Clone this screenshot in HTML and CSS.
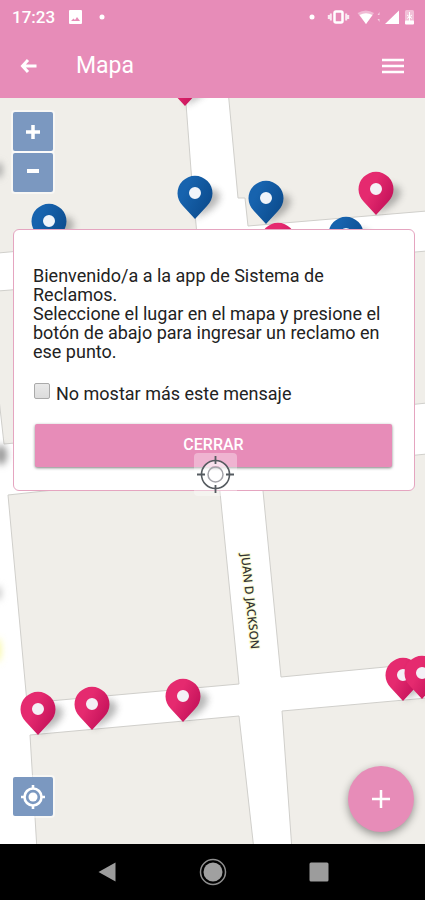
FILE: index.html
```html
<!DOCTYPE html>
<html lang="es">
<head>
<meta charset="utf-8">
<meta name="viewport" content="width=device-width, initial-scale=1">
<title>Mapa</title>
<link rel="stylesheet" href="styles.css">
</head>
<body>
<header class="top">
  <div class="status">
    <div class="status-group">
      <span class="clock">17:23</span>
      <svg class="status-left" width="40" height="16" viewBox="0 0 40 16" aria-hidden="true">
        <path fill="#fff" fill-rule="evenodd" d="M1 1h11a1 1 0 0 1 1 1v12a1 1 0 0 1-1 1H1a1 1 0 0 1-1-1V2a1 1 0 0 1 1-1zM2 12h9L8 8l-2 3-1.500-1.500z"/>
        <circle cx="33" cy="8" r="2.500" fill="#fff"/>
      </svg>
    </div>
    <svg class="status-right" width="106" height="18" viewBox="0 0 106 18" aria-hidden="true">
      <circle cx="4" cy="9" r="2.500" fill="#fff"/>
      <rect x="26.500" y="3.500" width="8" height="11" rx="1.500" fill="none" stroke="#fff" stroke-width="2.500"/>
      <path d="M22.800 5.500v7M38.200 5.500v7M20.800 7v4M40.200 7v4" fill="none" stroke="#fff" stroke-width="2" opacity=".8"/>
      <path d="M49.500 5Q58 0 66 5L58 16z" fill="#fff" opacity=".4"/>
      <path d="M51.500 7Q58 3.500 64.500 7L58 16z" fill="#fff"/>
      <path d="M71.500 4l-2 3h2zM71.500 14l-2-3h2z" fill="#fff" opacity=".6"/>
      <path d="M91 2.500V16H77z" fill="#fff"/>
      <rect x="97" y="2" width="9" height="14" rx="1.500" fill="#fff" opacity=".45"/>
      <path d="M101.500 4v9M99 7l5 3.500M104 7l-5 3.500" stroke="#fff" fill="none"/>
      <rect x="97" y="12.500" width="9" height="4" rx="1" fill="#fff"/>
    </svg>
  </div>
  <div class="toolbar">
    <button class="icon-btn" type="button" aria-label="Volver">
      <svg width="18" height="16" viewBox="0 0 18 16"><path d="M8 2L2.500 8 8 14M3 8h13.500" fill="none" stroke="#fff" stroke-width="3"/></svg>
    </button>
    <h1 class="title">Mapa</h1>
    <button class="icon-btn" type="button" aria-label="Menú">
      <svg width="22" height="16" viewBox="0 0 22 16"><path d="M0 2h22M0 8h22M0 14h22" stroke="#fff" stroke-width="2.600"/></svg>
    </button>
  </div>
</header>

<main class="map">
  <svg class="map-canvas" viewBox="0 98 425 746" preserveAspectRatio="xMidYMid slice" role="img" aria-label="Plano de calles">
    <defs>
      <linearGradient id="pink" x1="0" y1="0" x2="1" y2=".6">
        <stop offset=".45" stop-color="#e52a6f"/><stop offset="1" stop-color="#c4125a"/>
      </linearGradient>
      <linearGradient id="blue" x1="0" y1="0" x2="1" y2=".6">
        <stop offset=".3" stop-color="#1763ae"/><stop offset="1" stop-color="#0c4c8e"/>
      </linearGradient>
      <filter id="soft" x="-60%" y="-60%" width="220%" height="220%"><feGaussianBlur stdDeviation="3.500"/></filter>
      <path id="shadow" d="M0 26L10 20Q25 12 25 2Q21-6 12-4z" fill="#444" opacity=".38" filter="url(#soft)"/>
      <path id="drop" fill-rule="evenodd" d="M0 26L-12 13A17.500 17.500 0 1 1 12 13zM0-6A6 6 0 1 0 0 6A6 6 0 1 0 0-6z"/>
      <g id="pin-pink"><use href="#shadow"/><circle r="7" fill="#f4f0f6"/><use href="#drop" fill="url(#pink)"/></g>
      <g id="pin-blue"><use href="#shadow"/><circle r="7" fill="#f0f4fa"/><use href="#drop" fill="url(#blue)"/></g>
    </defs>
    <g fill="#f0eee9" stroke="#d0cfcb">
      <path d="M-2 90H185L191 170L197 235L-2 253z"/>
      <path d="M228 90L238 198H245L248 226L427 211V90z"/>
      <path d="M-2 291L200 275L214 425L4 444L-2 390z"/>
      <path d="M250 266L427 251V403L264 420z"/>
      <path d="M8 495L218 472L239 684L27 703z"/>
      <path d="M261 470L427 454V663L281 677z"/>
      <path d="M30 735L239 716L254 850H37z"/>
      <path d="M282 711L427 698V850H292z"/>
    </g>
    <g filter="url(#soft)">
      <ellipse cx="-1" cy="170" rx="3" ry="8" fill="#999"/>
      <ellipse cx="1" cy="455" rx="6" ry="10" fill="#999"/>
      <ellipse cx="-2" cy="593" rx="3" ry="7" fill="#bbb"/>
      <ellipse cx="-2" cy="650" rx="2" ry="12" fill="#f4f46a"/>
    </g>
    <text class="street" transform="translate(241 554) rotate(84)">JUAN D JACKSON</text>
    <use href="#pin-pink" x="185" y="80"/>
    <use href="#pin-blue" x="195" y="193"/>
    <use href="#pin-blue" x="266" y="198"/>
    <use href="#pin-pink" x="376" y="189"/>
    <use href="#pin-blue" x="49" y="221"/>
    <use href="#pin-pink" x="278" y="240"/>
    <use href="#pin-blue" x="346" y="234"/>
    <use href="#pin-pink" x="38" y="709"/>
    <use href="#pin-pink" x="92" y="704"/>
    <use href="#pin-pink" x="183" y="696"/>
    <use href="#pin-pink" x="403" y="675"/>
    <use href="#pin-pink" x="422" y="673"/>
  </svg>

  <div class="zoom">
    <button class="map-btn" type="button" aria-label="Acercar"><svg width="14" height="14" viewBox="0 0 14 14"><path d="M7 0v14M0 7h14" stroke="#fff" stroke-width="3.500"/></svg></button>
    <button class="map-btn" type="button" aria-label="Alejar"><svg width="14" height="14" viewBox="0 0 14 14"><path d="M1 5h12" stroke="#fff" stroke-width="4"/></svg></button>
  </div>

  <section class="dialog" role="dialog" aria-label="Bienvenida">
    <p class="message">Bienvenido/a a la app de Sistema de Reclamos.<br>Seleccione el lugar en el mapa y presione el botón de abajo para ingresar un reclamo en ese punto.</p>
    <div class="option">
      <input class="check" type="checkbox" id="hide-message">
      <label for="hide-message">No mostar más este mensaje</label>
    </div>
    <button class="close" type="button">CERRAR</button>
  </section>

  <svg class="target" width="43" height="43" viewBox="0 0 43 43" aria-hidden="true">
    <rect width="43" height="43" rx="4" fill="#fff" opacity=".35"/>
    <g fill="none" stroke="#fff" stroke-opacity=".6"><circle cx="21.500" cy="21.500" r="11" stroke-width="5"/></g>
    <g fill="none" stroke="#555b60">
      <circle cx="21.500" cy="21.500" r="14" stroke-width="1.600"/>
      <circle cx="21.500" cy="21.500" r="7.500" stroke="#a5a5ab" stroke-width="1.500"/>
      <path d="M21.500 3v8M21.500 32v8M3 21.500h8M32 21.500h8" stroke-width="1.800"/>
    </g>
  </svg>

  <button class="map-btn locate" type="button" aria-label="Mi ubicación">
    <svg width="24" height="24" viewBox="0 0 24 24"><circle cx="12" cy="12" r="8.500" fill="none" stroke="#fff" stroke-width="2.600"/><circle cx="12" cy="12" r="4.500" fill="#fff"/><path d="M12 0v4M12 20v4M0 12h4M20 12h4" stroke="#fff" stroke-width="2.600"/></svg>
  </button>
  <button class="add" type="button" aria-label="Agregar reclamo">
    <svg width="20" height="20" viewBox="0 0 20 20"><path d="M10 1v18M1 10h18" stroke="#fff" stroke-width="2.500"/></svg>
  </button>
</main>

<nav class="system" aria-label="Sistema">
  <button class="icon-btn" type="button" aria-label="Atrás"><svg width="20" height="22" viewBox="0 0 20 22"><path d="M18.500 1.500v19L1.500 11z" fill="#9c9c9c"/></svg></button>
  <button class="icon-btn" type="button" aria-label="Inicio"><svg width="28" height="28" viewBox="0 0 28 28"><circle cx="14" cy="14" r="12.500" fill="none" stroke="#8e8e8e" stroke-width="1.500"/><circle cx="14" cy="14" r="9.500" fill="#a0a0a0"/></svg></button>
  <button class="icon-btn" type="button" aria-label="Recientes"><svg width="20" height="20" viewBox="0 0 20 20"><rect x=".5" y=".5" width="19" height="19" rx="1.500" fill="#9c9c9c"/></svg></button>
</nav>
</body>
</html>
```
FILE: styles.css
```css
* {
  box-sizing: border-box;
}

body {
  margin: 0;
  min-height: 100vh;
  display: flex;
  flex-direction: column;
  font-family: Roboto, "Liberation Sans", sans-serif;
  color: #222;
}

button {
  border: 0;
  padding: 0;
  font-family: inherit;
  cursor: pointer;
}

svg {
  display: block;
}

.top {
  background: #e78cb8;
  color: #fff;
}

.status {
  display: flex;
  justify-content: space-between;
  align-items: center;
  height: 34px;
  padding: 0 11px 0 12px;
}

.status-group {
  display: flex;
  align-items: center;
  gap: 14px;
}

.clock {
  font-size: 17px;
  font-weight: 500;
}

.toolbar {
  display: flex;
  align-items: center;
  height: 64px;
  padding: 0 21px 0 20px;
}

.icon-btn {
  display: grid;
  place-items: center;
  background: none;
}

.title {
  flex: 1;
  margin: 0;
  padding-left: 38px;
  font-size: 23px;
  font-weight: 400;
  line-height: 28px;
}

.map {
  position: relative;
  flex: 1;
  min-height: 480px;
  overflow: hidden;
  background: #fff;
}

.map-canvas {
  position: absolute;
  inset: 0;
  width: 100%;
  height: 100%;
}

.street {
  font: 500 12px "Noto Sans", sans-serif;
  fill: #333;
  stroke: #fbfbd0;
  stroke-width: 2px;
  paint-order: stroke;
}

.zoom {
  position: absolute;
  top: 14px;
  left: 13px;
  display: grid;
  gap: 2px;
}

.map-btn {
  display: grid;
  place-items: center;
  width: 40px;
  height: 39px;
  border-radius: 2px;
  background: #7b98c0;
  box-shadow: 0 0 0 2px rgba(255, 255, 255, 0.5);
}

.locate {
  position: absolute;
  left: 13px;
  bottom: 28px;
}

.dialog {
  position: absolute;
  top: 131px;
  left: 13px;
  right: 10px;
  padding: 36px 22px 23px 21px;
  border: 1px solid #e5a5c0;
  border-radius: 6px;
  background: #fff;
  font-size: 18px;
}

.message {
  margin: 0 -2px 20px;
  line-height: 19px;
}

.option {
  display: flex;
  align-items: center;
  gap: 6px;
  height: 24px;
  margin: 0 -1px 19px;
}

.check {
  appearance: none;
  width: 16px;
  height: 16px;
  margin: 0 0 5px;
  border: 1px solid #aaa;
  border-radius: 2px;
  background: linear-gradient(#e9e9e9, #dcdcdc);
}

.close {
  display: block;
  width: 100%;
  height: 43px;
  padding-bottom: 3px;
  border-radius: 2px;
  background: #e78cb8;
  color: #fff;
  font-size: 16px;
  font-weight: 500;
  line-height: 19px;
  box-shadow: 0 1px 3px rgba(0, 0, 0, 0.5);
}

.target {
  position: absolute;
  top: 355px;
  left: calc(50% - 19px);
  pointer-events: none;
}

.add {
  position: absolute;
  right: 11px;
  bottom: 12px;
  display: grid;
  place-items: center;
  width: 66px;
  height: 66px;
  border-radius: 50%;
  background: #e78cb8;
  box-shadow: 0 3px 8px rgba(0, 0, 0, 0.4);
}

.system {
  display: flex;
  justify-content: center;
  align-items: center;
  gap: 82px;
  height: 56px;
  background: #000;
}
```
